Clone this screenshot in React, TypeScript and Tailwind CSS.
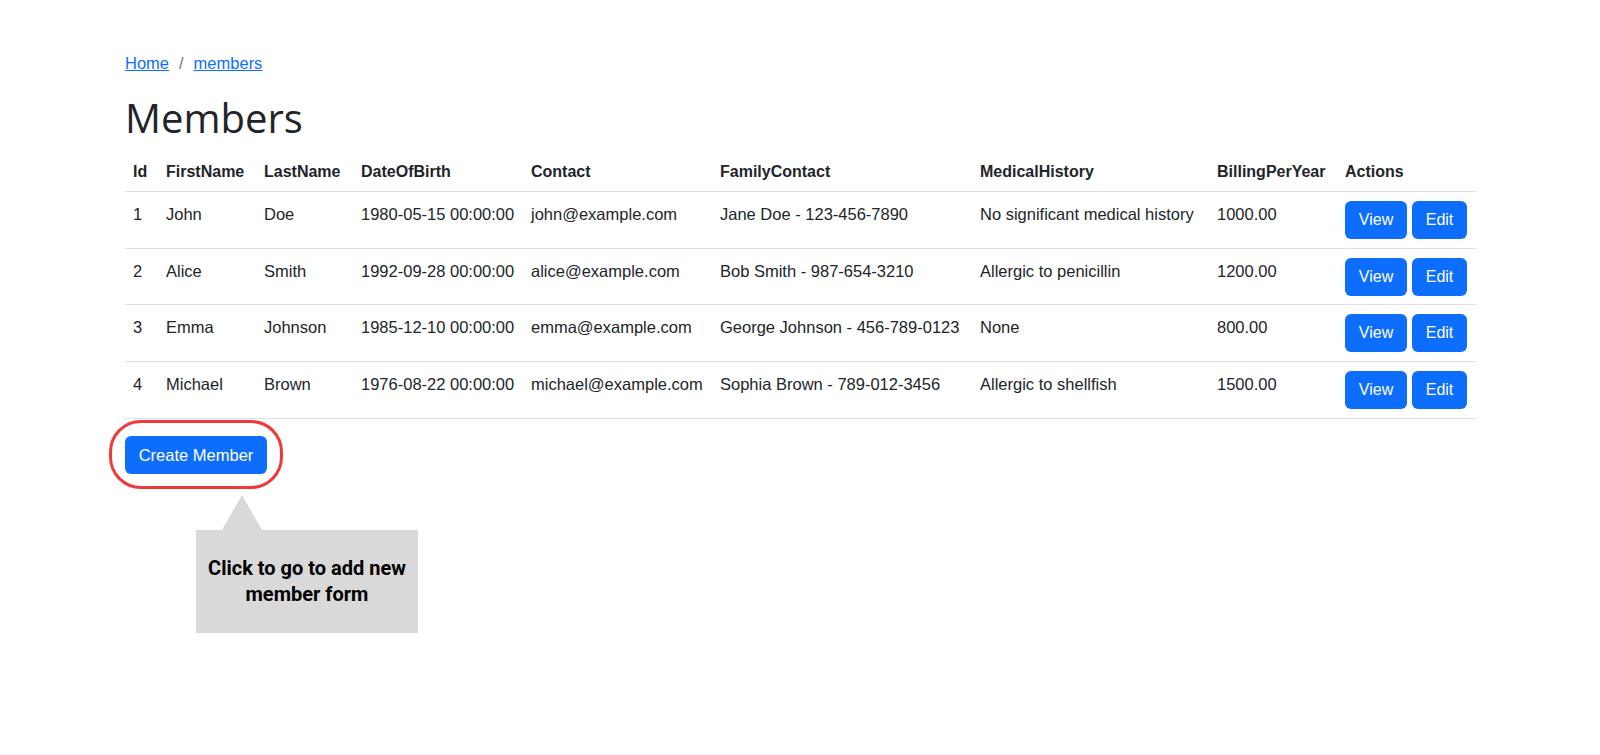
import React from "react";

type Member = {
  id: number;
  firstName: string;
  lastName: string;
  dob: string;
  contact: string;
  family: string;
  medical: string;
  billing: string;
};

const members: Member[] = [
  { id: 1, firstName: "John", lastName: "Doe", dob: "1980-05-15 00:00:00", contact: "john@example.com", family: "Jane Doe - 123-456-7890", medical: "No significant medical history", billing: "1000.00" },
  { id: 2, firstName: "Alice", lastName: "Smith", dob: "1992-09-28 00:00:00", contact: "alice@example.com", family: "Bob Smith - 987-654-3210", medical: "Allergic to penicillin", billing: "1200.00" },
  { id: 3, firstName: "Emma", lastName: "Johnson", dob: "1985-12-10 00:00:00", contact: "emma@example.com", family: "George Johnson - 456-789-0123", medical: "None", billing: "800.00" },
  { id: 4, firstName: "Michael", lastName: "Brown", dob: "1976-08-22 00:00:00", contact: "michael@example.com", family: "Sophia Brown - 789-012-3456", medical: "Allergic to shellfish", billing: "1500.00" },
];

const headers = ["Id", "FirstName", "LastName", "DateOfBirth", "Contact", "FamilyContact", "MedicalHistory", "BillingPerYear", "Actions"];
const colWidths = ["w-[33px]", "w-[98px]", "w-[97px]", "w-[170px]", "w-[189px]", "w-[260px]", "w-[237px]", "w-[128px]", "w-[139px]"];

// data cells sit at the top of the row, the buttons set the row height
const td = "px-2 pt-[10px] align-top text-[16.5px] whitespace-nowrap";

export default function App() {
  return (
    <div className="min-h-[755px] bg-white pl-[125px] pt-[51px] text-[16px] leading-6 text-[#212529] font-['Liberation_Sans',Arial,sans-serif]">
      <nav className="flex items-center text-[16.5px]">
        <a href="#" className="text-[#0d6efd] underline">Home</a>
        <span className="px-[10px] text-[#6c757d]">/</span>
        <a href="#" className="text-[#0d6efd] underline">members</a>
      </nav>

      <h1 className="mt-[19px] text-[40px] leading-[48px] font-medium font-['Open_Sans',sans-serif]">Members</h1>

      <table className="mt-[9px] w-[1351px] table-fixed border-collapse">
        <colgroup>
          {colWidths.map((w, i) => (
            <col key={i} className={w} />
          ))}
        </colgroup>
        <thead>
          <tr className="border-b border-[#dee2e6]">
            {headers.map((h) => (
              <th key={h} className="px-2 pt-[9px] pb-[7px] text-left font-bold whitespace-nowrap">
                {h}
              </th>
            ))}
          </tr>
        </thead>
        <tbody>
          {members.map((m) => (
            <tr key={m.id} className="border-b border-[#dee2e6]">
              <td className={td}>{m.id}</td>
              <td className={td}>{m.firstName}</td>
              <td className={td}>{m.lastName}</td>
              <td className={td}>{m.dob}</td>
              <td className={td}>{m.contact}</td>
              <td className={td}>{m.family}</td>
              <td className={td}>{m.medical}</td>
              <td className={td}>{m.billing}</td>
              <td className="px-2 pt-[9px] pb-[8.67px] align-top">
                <div className="flex gap-[5px]">
                  <button className="h-[38px] w-[62px] rounded-md bg-[#0d6efd] text-white">View</button>
                  <button className="h-[38px] w-[55px] rounded-md bg-[#0d6efd] text-white">Edit</button>
                </div>
              </td>
            </tr>
          ))}
        </tbody>
      </table>

      <div className="relative mt-[17px] w-fit">
        <button className="h-[38px] w-[142px] rounded-md bg-[#0d6efd] text-[16.5px] text-white">Create Member</button>
        <div className="pointer-events-none absolute left-[-16px] top-[-16px] h-[69px] w-[174px] rounded-[32px] border-[3px] border-[#f03a3a]" />
      </div>

      <div className="ml-[71px] mt-[21px] w-[222px] font-['Roboto',sans-serif]">
        <svg width="222" height="35" viewBox="0 0 222 35" className="block">
          <polygon points="26,35 46,0 66,35" fill="#d9d9d9" />
        </svg>
        <div className="flex h-[103px] items-center justify-center bg-[#d9d9d9] text-center text-[20px] leading-[26px] font-bold text-black">
          <p>
            Click to go to add new
            <br />
            member form
          </p>
        </div>
      </div>
    </div>
  );
}
